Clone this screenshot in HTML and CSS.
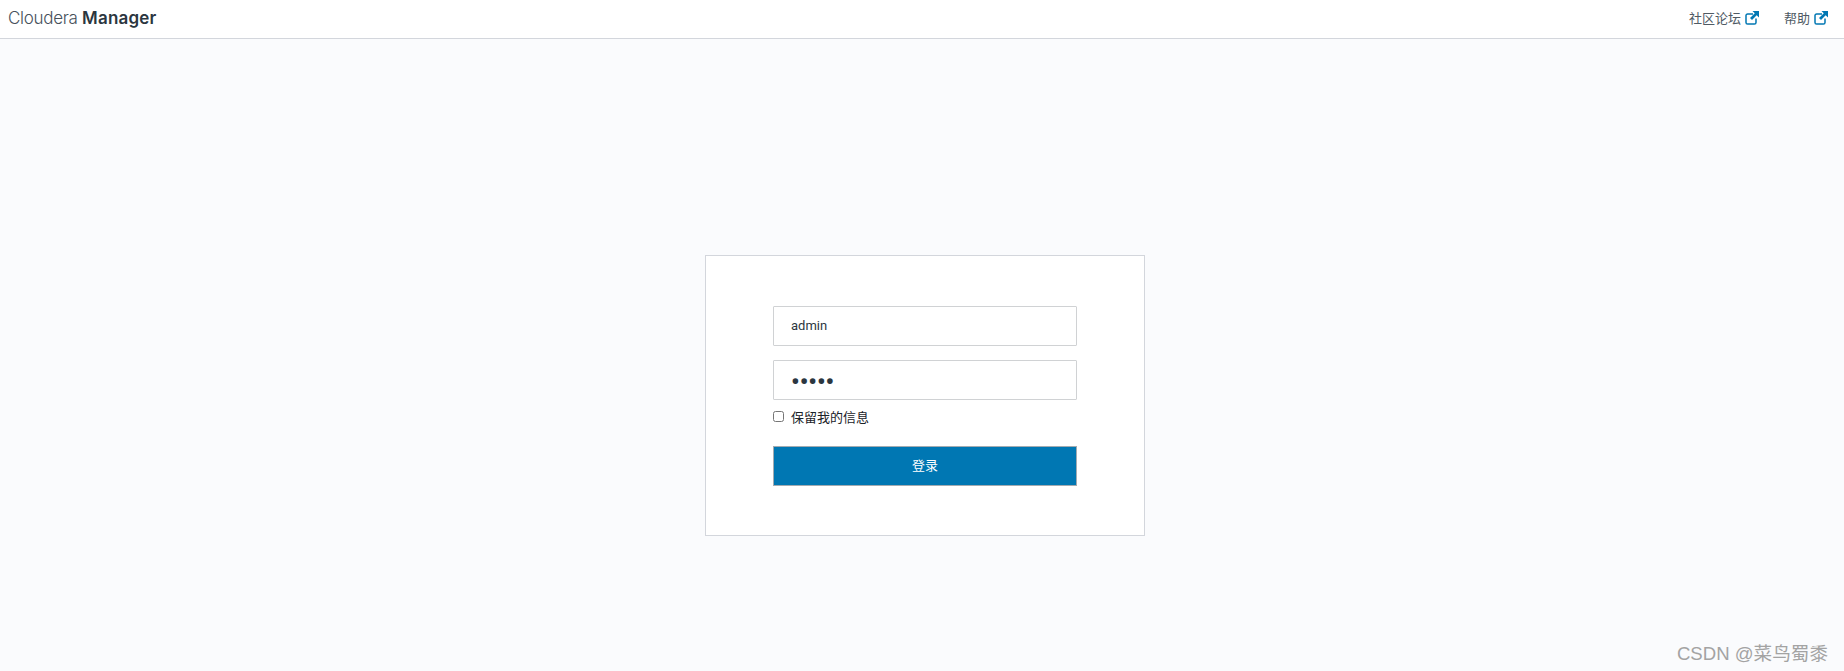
FILE: index.html
```html
<!DOCTYPE html>
<html lang="zh">
<head>
  <meta charset="UTF-8">
  <title>Cloudera Manager</title>
  <link rel="stylesheet" href="styles.css">
</head>
<body>
  <header class="navbar">
    <div class="brand">Cloudera <strong>Manager</strong></div>
    <nav class="nav-links">
      <a href="#">社区论坛
        <svg class="ext-icon" viewBox="0 0 14 14"><path d="M8 3H2.600A1.600 1.600 0 0 0 1 4.600v6.800A1.600 1.600 0 0 0 2.600 13h6.800A1.600 1.600 0 0 0 11 11.400V7.500" fill="none" stroke="currentColor" stroke-width="1.500"/><path d="M7.500 0h6.500v6.500L11.700 4.200 7 9 5 7 9.800 2.300z" fill="currentColor"/></svg>
      </a>
      <a href="#">帮助
        <svg class="ext-icon" viewBox="0 0 14 14"><path d="M8 3H2.600A1.600 1.600 0 0 0 1 4.600v6.800A1.600 1.600 0 0 0 2.600 13h6.800A1.600 1.600 0 0 0 11 11.400V7.500" fill="none" stroke="currentColor" stroke-width="1.500"/><path d="M7.500 0h6.500v6.500L11.700 4.200 7 9 5 7 9.800 2.300z" fill="currentColor"/></svg>
      </a>
    </nav>
  </header>

  <main class="login-page">
    <form class="login-card">
      <input class="field" type="text" value="admin">
      <input class="field field-password" type="password" value="admin">
      <label class="remember"><input type="checkbox"> 保留我的信息</label>
      <button class="login-btn" type="button">登录</button>
    </form>
  </main>

  <div class="watermark">CSDN @菜鸟蜀黍</div>
</body>
</html>
```

FILE: styles.css
```css
* {
  box-sizing: border-box;
}
html, body {
  height: 100%;
}
body {
  margin: 0;
  overflow: hidden;
  background: #fafbfd;
  color: #2b3640;
  font-family: Roboto, "Noto Sans CJK SC", sans-serif;
  font-size: 13px;
}
.navbar {
  height: 39px;
  background: #fff;
  border-bottom: 1px solid #d3d6dc;
  display: flex;
  justify-content: space-between;
  align-items: center;
  padding: 0 16px 3px 8px;
}
.brand {
  font-family: Inter, Roboto, sans-serif;
  font-size: 17px;
  font-weight: 300;
  letter-spacing: -0.3px;
  color: #47515b;
}
.brand strong {
  font-weight: 600;
  letter-spacing: 0.2px;
  color: #2b3640;
}
.nav-links {
  display: flex;
  gap: 25px;
}
.nav-links a {
  display: flex;
  align-items: center;
  gap: 4px;
  color: #4f5a64;
  text-decoration: none;
  font-size: 13px;
}
.ext-icon {
  width: 14px;
  height: 14px;
  color: #0077b3;
}
.login-page {
  display: flex;
  justify-content: center;
  padding: 216px 0 0 6px;
}
.login-card {
  width: 440px;
  height: 281px;
  background: #fff;
  border: 1px solid #d3d6dc;
  padding: 50px 67px 0;
  display: flex;
  flex-direction: column;
}
.field {
  width: 100%;
  height: 40px;
  margin-bottom: 14px;
  padding: 0 17px 2px;
  background: #fff;
  border: 1px solid #d0d2d4;
  border-radius: 1px;
  color: #2b3640;
  font-family: Roboto, sans-serif;
  font-size: 13px;
  outline: none;
}
.field-password {
  padding: 3px 17px 0;
  font-size: 24px;
  font-weight: 700;
}
.remember {
  display: flex;
  align-items: center;
  gap: 7px;
  height: 17px;
  margin-top: -6px;
  color: #1a2228;
  font-size: 13px;
}
.remember input {
  width: 11px;
  height: 11px;
  margin: 0;
}
.login-btn {
  height: 40px;
  margin-top: 21px;
  padding-bottom: 5px;
  background: #0077b3;
  border: 1px solid #a3abb1;
  color: #fff;
  font-family: Roboto, "Noto Sans CJK SC", sans-serif;
  font-size: 13px;
}
.watermark {
  position: absolute;
  right: 16px;
  bottom: 6px;
  color: #a3a3a3;
  font-family: "Liberation Sans", "Noto Sans CJK SC", sans-serif;
  font-size: 18.6px;
}
```
